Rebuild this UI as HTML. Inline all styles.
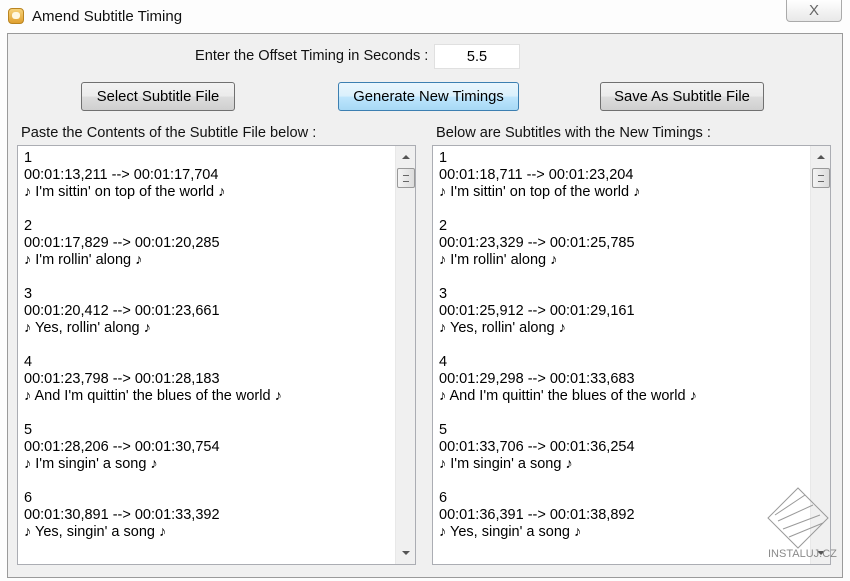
<!DOCTYPE html>
<html><head><style>
*{margin:0;padding:0;box-sizing:border-box}
body{width:850px;height:581px;background:#fdfdfd;font-family:"Liberation Sans",Arial,sans-serif;position:relative;overflow:hidden;color:#000}
.abs{position:absolute}
.title{left:32px;top:8px;font-size:15px;color:#111}
.icon{left:8px;top:8px;width:16px;height:16px;border-radius:4px;background:linear-gradient(#f6d27a,#e0a030);border:1px solid #b98420}
.icon:after{content:"";position:absolute;left:3px;top:3px;width:8px;height:7px;background:#fff8e0;border-radius:3px}
.close{left:786px;top:0;width:56px;height:22px;border:1px solid #aaa;border-top:none;border-radius:0 0 4px 4px;background:linear-gradient(#fff,#e8e8e8);text-align:center;font-size:15px;color:#666;line-height:22px}
.win{left:7px;top:33px;width:836px;height:545px;background:#f0f0f0;border:1px solid #9a9a9a}
.lbl{font-size:14.6px;color:#111}
.inp{left:434px;top:44px;width:86px;height:25px;background:#fff;border:1px solid #e0e0e0;font-size:14.5px;text-align:center;line-height:24px}
.btn{height:29px;top:82px;border:1px solid #707070;border-radius:3px;background:linear-gradient(#f2f2f2 0,#ebebeb 50%,#dddddd 51%,#cfcfcf 100%);font-size:14.8px;text-align:center;line-height:29px}
.gen{border-color:#3c7fb1;background:linear-gradient(#eaf6fd 0,#d9f0fc 50%,#bee6fd 51%,#a7d9f5 100%)}
.box{top:145px;width:399px;height:420px;background:#fff;border:1px solid #abadb3}
.txt{position:absolute;left:6px;top:4px;font-size:14.5px;line-height:17px;white-space:pre}
.sb{position:absolute;right:0;top:0;width:20px;height:100%;background:#f0f0f0;border-left:1px solid #e8e8e8}
.up,.dn{position:absolute;left:6px;width:0;height:0;border-left:4px solid transparent;border-right:4px solid transparent}
.up{top:9px;border-bottom:4px solid #555}
.dn{bottom:9px;border-top:4px solid #555}
.th{position:absolute;left:1px;top:22px;width:18px;height:20px;border:1px solid #999;border-radius:2px;background:linear-gradient(90deg,#f4f4f4,#dcdcdc)}
.th:after{content:"";position:absolute;left:5px;top:6px;width:6px;height:5px;border-top:1px solid #666;border-bottom:1px solid #666}
</style></head><body>
<div class="abs icon"></div>
<div class="abs title">Amend Subtitle Timing</div>
<div class="abs close">X</div>
<div class="abs win"></div>
<div class="abs lbl" style="left:195px;top:48px">Enter the Offset Timing in Seconds :</div>
<div class="abs inp">5.5</div>
<div class="abs btn" style="left:81px;width:154px">Select Subtitle File</div>
<div class="abs btn gen" style="left:338px;width:181px">Generate New Timings</div>
<div class="abs btn" style="left:600px;width:164px">Save As Subtitle File</div>
<div class="abs lbl" style="left:21px;top:125px">Paste the Contents of the Subtitle File below :</div>
<div class="abs lbl" style="left:436px;top:125px">Below are Subtitles with the New Timings :</div>
<div class="abs box" style="left:17px"><div class="txt">1
00:01:13,211 --> 00:01:17,704
♪ I'm sittin' on top of the world ♪

2
00:01:17,829 --> 00:01:20,285
♪ I'm rollin' along ♪

3
00:01:20,412 --> 00:01:23,661
♪ Yes, rollin' along ♪

4
00:01:23,798 --> 00:01:28,183
♪ And I'm quittin' the blues of the world ♪

5
00:01:28,206 --> 00:01:30,754
♪ I'm singin' a song ♪

6
00:01:30,891 --> 00:01:33,392
♪ Yes, singin' a song ♪</div><div class="sb"><div class="up"></div><div class="th"></div><div class="dn"></div></div></div>
<div class="abs box" style="left:432px"><div class="txt">1
00:01:18,711 --> 00:01:23,204
♪ I'm sittin' on top of the world ♪

2
00:01:23,329 --> 00:01:25,785
♪ I'm rollin' along ♪

3
00:01:25,912 --> 00:01:29,161
♪ Yes, rollin' along ♪

4
00:01:29,298 --> 00:01:33,683
♪ And I'm quittin' the blues of the world ♪

5
00:01:33,706 --> 00:01:36,254
♪ I'm singin' a song ♪

6
00:01:36,391 --> 00:01:38,892
♪ Yes, singin' a song ♪</div><div class="sb"><div class="up"></div><div class="th"></div><div class="dn"></div></div></div>
<svg class="abs" style="left:765px;top:485px" width="70" height="65" viewBox="0 0 70 65"><g fill="none" stroke="#9a9a9a" stroke-width="1"><path d="M3 33 L33 3 L63 33 L33 63Z"/><path d="M10 30 L40 10 M13 36 L48 20 M18 44 L55 30 M24 52 L58 38"/></g></svg>
<div class="abs" style="left:768px;top:548px;font-size:11px;color:#8a8a8a">INSTALUJ.CZ</div>
</body></html>
